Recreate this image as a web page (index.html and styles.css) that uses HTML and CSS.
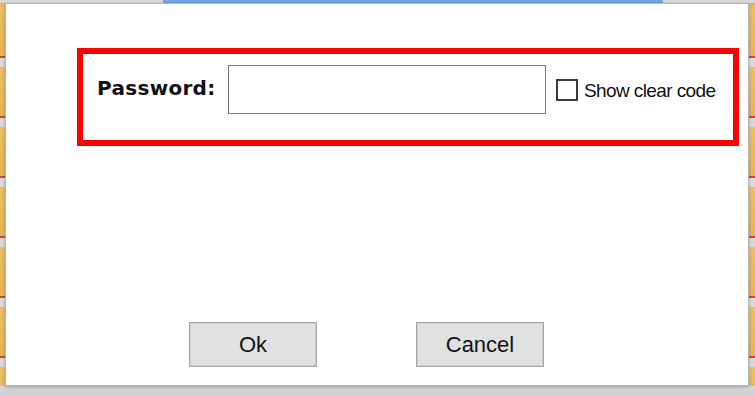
FILE: index.html
```html
<!DOCTYPE html>
<html lang="en">
<head>
    <meta charset="UTF-8">
    <meta name="viewport" content="width=device-width, initial-scale=1.0">
    <title>Password</title>
    <link rel="stylesheet" href="styles.css">
</head>
<body>
    <div class="dialog">
        <div class="frame">
            <label class="label" for="password">Password:</label>
            <input type="password" id="password" class="field">
            <label class="check">
                <span class="box"></span>
                <span class="check-text">Show clear code</span>
            </label>
        </div>
        <div class="actions">
            <button class="btn">Ok</button>
            <button class="btn">Cancel</button>
        </div>
    </div>
</body>
</html>
```

FILE: styles.css
```css
html, body {
    margin: 0;
    height: 396px;
    overflow: hidden;
}
body {
    font-family: "Liberation Sans", Arial, sans-serif;
    color: #111;
    background:
        linear-gradient(#7aa7e0, #6f9fdb) 163px 0 / 500px 3px no-repeat,
        linear-gradient(#dcdcdc, #d4d4d4) 0 0 / 100% 3px no-repeat,
        linear-gradient(#d6d6d6, #cfcfcf) 0 386px / 100% 10px no-repeat,
        repeating-linear-gradient(to bottom,
            #e9bf68 0, #e3b458 49px,
            #c9473b 49px, #c9473b 51px,
            #d9d9d9 51px, #d9d9d9 60px) 0 7px;
    display: flex;
    align-items: flex-start;
}
.dialog {
    margin: 3px 0 0 5px;
    width: 742px;
    height: 381px;
    background: #fff;
    border: 1px solid #b4b4b4;
    box-shadow: 0 1px 3px rgba(0, 0, 0, 0.25);
    display: flex;
    flex-direction: column;
}
.frame {
    margin: 44px 0 0 71px;
    width: 636px;
    height: 49px;
    border: 6px solid #ff0000;
    padding: 11px 0 26px 14px;
    display: flex;
    align-items: center;
    align-self: flex-start;
}
.label {
    font-family: "DejaVu Sans", sans-serif;
    font-weight: bold;
    font-size: 20px;
    letter-spacing: 0.3px;
    width: 131px;
    margin-top: -4px;
}
.field {
    width: 318px;
    height: 49px;
    box-sizing: border-box;
    border: 1px solid #7a7a7a;
    background: #fff;
    margin: 0;
    padding: 0 6px;
    outline: none;
}
.check {
    display: flex;
    align-items: center;
    margin-left: 10px;
}
.box {
    width: 18px;
    height: 18px;
    border: 2px solid #3a3a3a;
    background: #fff;
}
.check-text {
    margin-left: 6px;
    font-size: 19px;
    letter-spacing: -0.6px;
    margin-top: 2px;
}
.actions {
    margin-top: 176px;
    padding-left: 183px;
    display: flex;
    gap: 99px;
}
.btn {
    width: 128px;
    height: 45px;
    background: #e1e1e1;
    border: 1px solid #a6a6a6;
    box-shadow: inset 0 0 0 1px #cdcdcd;
    font-family: "Liberation Sans", Arial, sans-serif;
    font-size: 22px;
    color: #111;
    padding: 0;
}
```
